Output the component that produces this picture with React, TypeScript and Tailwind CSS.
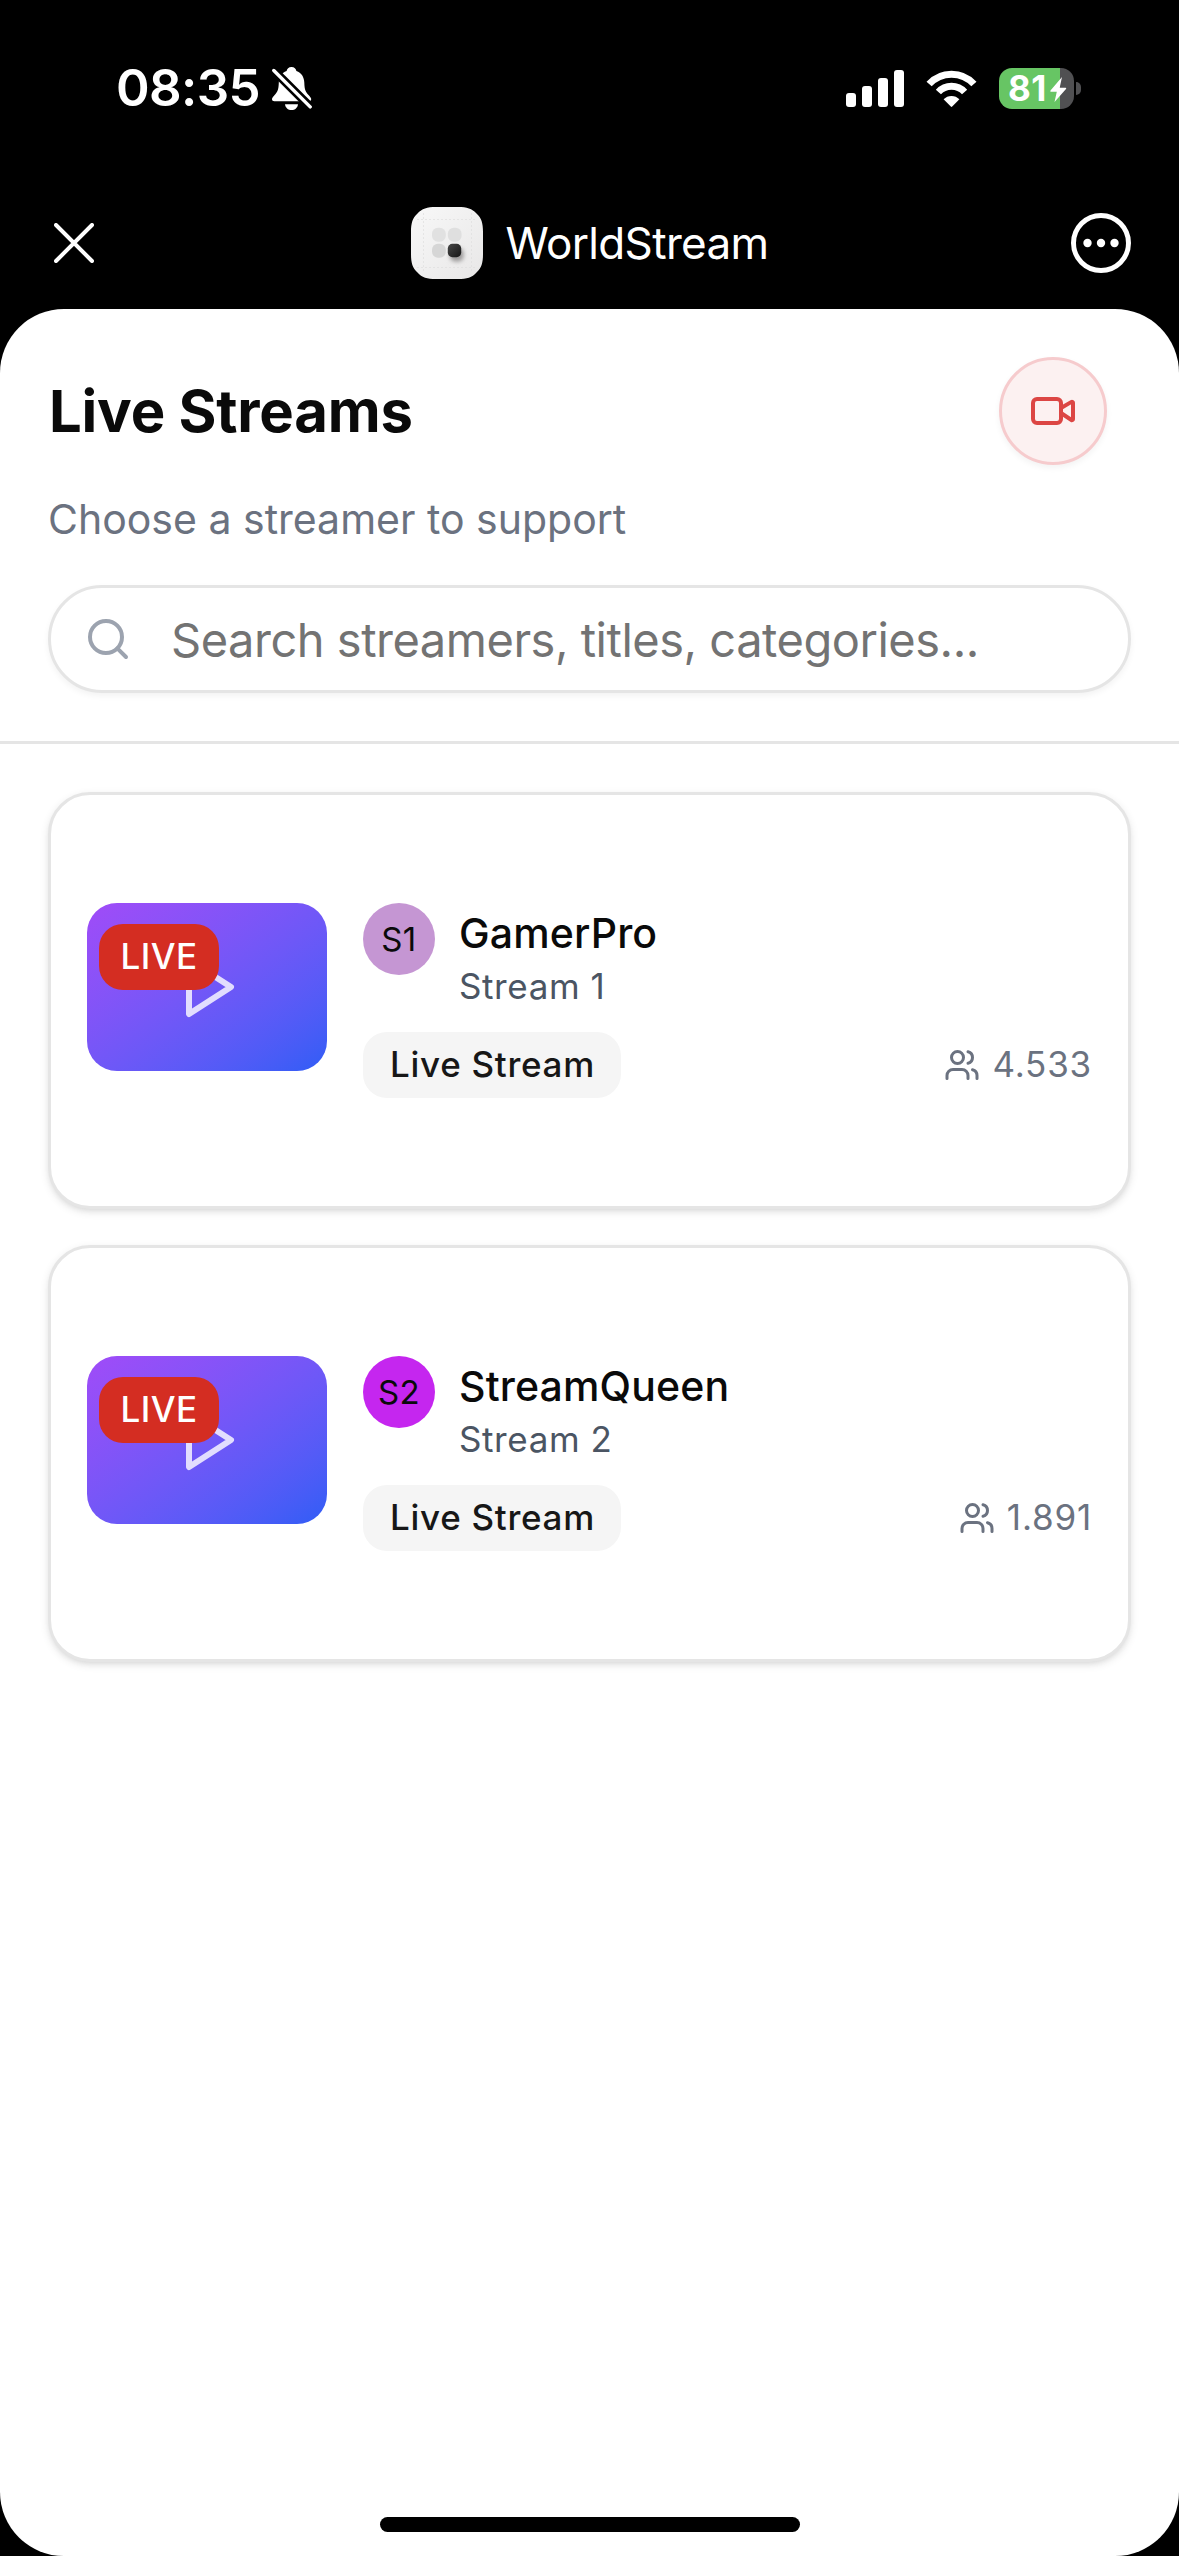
import React from "react";
import { Search, Users, Video } from "lucide-react";

interface Stream {
  id: string;
  name: string;
  title: string;
  category: string;
  viewers: string;
  avatarClass: string;
}

const streams: Stream[] = [
  { id: "S1", name: "GamerPro", title: "Stream 1", category: "Live Stream", viewers: "4.533", avatarClass: "bg-[#c596d3]" },
  { id: "S2", name: "StreamQueen", title: "Stream 2", category: "Live Stream", viewers: "1.891", avatarClass: "bg-[#c526ef]" },
];

const StatusBar = () => (
  <div className="flex h-[177px] shrink-0 items-center justify-between pl-[116px] pr-[98px] text-white">
    <div className="flex items-center gap-3">
      <span className="text-[51px] font-semibold tracking-[-0.6px]">08:35</span>
      <svg width="40" height="44" viewBox="0 0 40 44">
        <path d="M19.5 0C16.6 0 15 1.8 14.6 4C9.6 5.8 7 10 6.8 15.5C6.6 23 5.5 25 2.2 28.5C0.5 30.3 0 31.2 0 32.3C0 33.5 0.9 34.3 2.4 34.3H36.8C38.3 34.3 39.2 33.5 39.2 32.3C39.2 31.2 38.6 30.3 37 28.5C33.6 25 32.5 23 32.3 15.5C32.1 10 29.4 5.8 24.4 4C24 1.8 22.4 0 19.5 0Z" fill="white" />
        <path d="M13 37.2H26C25.6 40.7 23 43 19.5 43C16 43 13.4 40.7 13 37.2Z" fill="white" />
        <path d="M-2 -0.3L42 43.7" stroke="black" strokeWidth="8.6" />
        <path d="M1.8 3.5L38.2 39.9" stroke="white" strokeWidth="3.4" strokeLinecap="round" />
      </svg>
    </div>

    <div className="flex items-center gap-[22px]">
      <svg width="58" height="37" viewBox="0 0 58 37" fill="white">
        <rect x="0" y="23" width="10" height="14" rx="3" />
        <rect x="16" y="16" width="10" height="21" rx="3" />
        <rect x="32" y="8" width="10" height="29" rx="3" />
        <rect x="48" y="0" width="10" height="37" rx="3" />
      </svg>
      <svg width="51" height="37" viewBox="0 0 51 37" fill="none" stroke="white" strokeWidth="7">
        <path d="M3.1 14A30.4 30.4 0 0 1 47.9 14" />
        <path d="M12.4 22A17.7 17.7 0 0 1 38.6 22" />
        <path d="M17.6 29.3A11 11 0 0 1 33.4 29.3L26.2 36.6Q25.5 37.2 24.8 36.6Z" fill="white" stroke="none" />
      </svg>
      <div className="flex items-center gap-[2px]">
        <div className="relative flex h-[41px] w-[75px] items-center overflow-hidden rounded-[13px] bg-[linear-gradient(90deg,#67c564_61px,#505052_61px)] pl-[9px]">
          <span className="text-[35px] font-bold leading-none tracking-[0.5px]">81</span>
          <svg className="absolute left-0 top-0" width="75" height="41" viewBox="0 0 75 41" fill="white">
            <path d="M63 9L51.5 22.5Q50.8 23.7 52 23.7H57.8L55.5 34L67 21Q67.8 19.7 66.5 19.7H60.7Z" />
          </svg>
        </div>
        <div className="h-[13px] w-[5px] rounded-r-full bg-[#505052]" />
      </div>
    </div>
  </div>
);

const AppIcon = () => (
  <svg width="72" height="72" viewBox="0 0 72 72">
    <defs>
      <linearGradient id="tile" x1="0" y1="0" x2="1" y2="1">
        <stop offset="0" stopColor="#f8f8f8" />
        <stop offset="1" stopColor="#e8e7e7" />
      </linearGradient>
      <linearGradient id="knob" x1="0" y1="0" x2="1" y2="1">
        <stop offset="0" stopColor="#484848" />
        <stop offset="1" stopColor="#151515" />
      </linearGradient>
      <filter id="soft" x="-50%" y="-50%" width="200%" height="200%">
        <feGaussianBlur stdDeviation="2" />
      </filter>
    </defs>
    <path d="M25 0H47C56 0 61 1.500 65.500 6.500C70.500 11 72 16 72 25V47C72 56 70.500 61 65.500 65.500C61 70.500 56 72 47 72H25C16 72 11 70.500 6.500 65.500C1.500 61 0 56 0 47V25C0 16 1.500 11 6.500 6.500C11 1.500 16 0 25 0Z" fill="url(#tile)" />
    <path d="M12.5 6V66M60.5 6V66M6 12.5H66M6 60.5H66" stroke="#dedede" strokeWidth="0.7" strokeDasharray="2 2" />
    <rect x="21" y="20.8" width="13.8" height="14" rx="6" fill="#e1e1e1" />
    <rect x="36.8" y="20.8" width="13.8" height="14" rx="6" fill="#dfdfdf" />
    <rect x="21" y="36.8" width="13.8" height="14" rx="6" fill="#d6d6d6" />
    <rect x="39" y="41" width="13.5" height="13.5" rx="5" fill="#9a9898" filter="url(#soft)" />
    <rect x="36.8" y="36.8" width="13.4" height="13.4" rx="4.6" fill="url(#knob)" />
  </svg>
);

const AppHeader = () => (
  <div className="grid h-[132px] shrink-0 grid-cols-[1fr_auto_1fr] items-center pl-[54px] pr-12 text-white">
    <svg width="40" height="40" viewBox="0 0 40 40" stroke="white" strokeWidth="4" strokeLinecap="round">
      <path d="M2 2L38 38M38 2L2 38" />
    </svg>
    <div className="-ml-1.5 flex items-center gap-[23px]">
      <AppIcon />
      <span className="text-[44px] tracking-[-0.66px]">WorldStream</span>
    </div>
    <svg className="justify-self-end" width="60" height="60" viewBox="0 0 60 60" fill="white">
      <circle cx="30" cy="30" r="27.5" fill="none" stroke="white" strokeWidth="5" />
      <circle cx="16.5" cy="30" r="4.2" />
      <circle cx="30" cy="30" r="4.2" />
      <circle cx="43.5" cy="30" r="4.2" />
    </svg>
  </div>
);

const StreamCard = ({ stream }: { stream: Stream }) => (
  <article className="flex items-start gap-9 rounded-[42px] border-[3px] border-[#e5e5e5] bg-white px-9 py-[108px] shadow-[0_3px_9px_rgba(0,0,0,0.1),0_3px_6px_-3px_rgba(0,0,0,0.1)]">
    <div className="relative flex h-[168px] w-60 shrink-0 items-center justify-center rounded-[30px] bg-linear-to-br from-[#a04bf8] to-[#2f5df6]">
      {/* play outline, partly covered by the badge */}
      <svg width="72" height="72" viewBox="0 0 24 24" fill="none" stroke="white" strokeOpacity="0.8" strokeWidth="2" strokeLinecap="round" strokeLinejoin="round">
        <polygon points="6 3 20 12 6 21 6 3" />
      </svg>
      <span className="absolute left-3 top-[21px] flex h-[66px] w-[120px] items-center justify-center rounded-[24px] bg-[#d42d22] pb-px text-[35px] font-medium tracking-[0.4px] text-white">
        LIVE
      </span>
    </div>

    <div className="min-w-0 flex-1">
      <div className="flex items-start gap-6">
        <div className={`flex size-[72px] items-center justify-center rounded-full pt-[2px] text-[33px] tracking-[0.4px] text-[#0a0a0a] ${stream.avatarClass}`}>
          {stream.id}
        </div>
        <div>
          <h3 className="text-[41px] font-medium leading-[60px] tracking-[0.15px] text-[#0a0a0a]">{stream.name}</h3>
          <p className="text-[35px] leading-[46px] tracking-[0.6px] text-[#4b5563]">{stream.title}</p>
        </div>
      </div>
      <div className="mt-[23px] flex items-center justify-between">
        <span className="flex h-[66px] w-[258px] items-center justify-center rounded-[24px] bg-[#f5f5f5] pb-px pl-px text-[35px] font-medium tracking-[0.7px] text-[#171717]">
          {stream.category}
        </span>
        <span className="flex items-center gap-3 pb-px text-[35px] tracking-[0.8px] text-[#6b7280]">
          <Users className="size-9" strokeWidth={2} />
          {stream.viewers}
        </span>
      </div>
    </div>
  </article>
);

export default function App() {
  return (
    <div className="flex h-[2556px] w-[1179px] flex-col overflow-hidden bg-black font-[Inter,sans-serif]">
      <StatusBar />
      <AppHeader />

      <main className="flex flex-1 flex-col rounded-[64px] bg-white">
        <header className="border-b-[3px] border-[#e5e5e5] p-12">
          <div className="flex h-[108px] items-center justify-between pl-px pr-6">
            <h1 className="text-[58px] font-bold tracking-[-0.2px] text-[#0a0a0a]">Live Streams</h1>
            <button className="flex size-[108px] items-center justify-center rounded-full border-[3px] border-[#f6cbcd] bg-[#fcf1f1] text-[#dc4644] shadow-[0_3px_6px_rgba(0,0,0,0.05)]">
              <Video className="size-12" strokeWidth={2} />
            </button>
          </div>
          <p className="mt-6 text-[41px] leading-[60px] text-[#6b7280]">Choose a streamer to support</p>
          <label className="mt-9 flex h-[108px] items-center gap-9 rounded-full border-[3px] border-[#e5e5e5] bg-white pl-[33px] shadow-[0_3px_6px_rgba(0,0,0,0.05)]">
            <Search className="size-12 shrink-0 text-[#9ca3af]" strokeWidth={2} />
            <span className="pl-[3px] pt-[2px] text-[47px] tracking-[-0.48px] text-[#737373]">Search streamers, titles, categories...</span>
          </label>
        </header>

        <section className="flex flex-col gap-9 p-12">
          {streams.map((stream) => (
            <StreamCard key={stream.id} stream={stream} />
          ))}
        </section>

        <div className="mb-6 mt-auto h-[15px] w-[420px] self-center rounded-full bg-black" />
      </main>
    </div>
  );
}
